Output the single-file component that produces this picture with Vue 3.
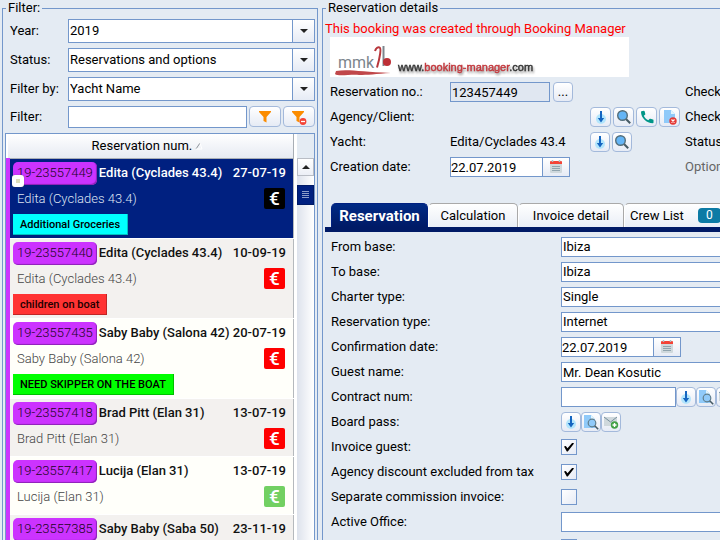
<template>
  <div class="app">
    <svg class="icon-defs" aria-hidden="true">
      <symbol id="icon-arrow-down" viewBox="0 0 16 16">
        <circle cx="8" cy="10" r="5" fill="#b3e5fc" />
        <path d="M7 2h2v7h2.2L8 13.4 4.8 9H7z" fill="#1565c0" />
      </symbol>
      <symbol id="icon-search" viewBox="0 0 16 16">
        <path d="M10 10l4.2 4.2" stroke="#455a64" stroke-width="2" />
        <circle cx="6.5" cy="6.5" r="4.8" fill="#64b5f6" stroke="#546e7a" stroke-width="1.4" />
      </symbol>
      <symbol id="icon-phone" viewBox="0 0 16 16">
        <path
          d="M2.4 2.2l2.5-.5c.4 0 .6.2.7.5l.7 2.7c.1.4 0 .6-.3.8L4.8 6.8c1 2 2.5 3.5 4.5 4.5l1.2-1.3c.2-.3.5-.4.8-.3l2.7.8c.4.1.5.3.5.7v2.3c0 .5-.3.7-.7.7C7.5 14.2 2 9 2 2.8z"
          fill="#009688"
        />
      </symbol>
      <symbol id="icon-file-remove" viewBox="0 0 16 16">
        <path d="M2 1h7l4 4v9H2z" fill="#90caf9" />
        <path d="M9 1v4h4z" fill="#e1f5fe" />
        <circle cx="11" cy="12" r="3.7" fill="#e53935" />
        <path d="M9.5 10.5l3 3m0-3l-3 3" stroke="#fff" stroke-width="1.2" />
      </symbol>
      <symbol id="icon-file-search" viewBox="0 0 16 16">
        <path d="M1 1h7l4 4v9H1z" fill="#90caf9" />
        <path d="M8 1v4h4z" fill="#e1f5fe" />
        <circle cx="9" cy="9" r="3.8" fill="#90caf9" stroke="#607d8b" stroke-width="1.2" />
        <path d="M11.7 11.7l3.5 3.5" stroke="#455a64" stroke-width="1.6" />
      </symbol>
      <symbol id="icon-mail-add" viewBox="0 0 16 16">
        <path d="M1 3h13v9H1z" fill="#cfd8dc" />
        <path d="M1 3l6.5 5L14 3" fill="none" stroke="#78909c" />
        <circle cx="11.5" cy="11" r="3.7" fill="#43a047" />
        <path d="M11.5 9v4m-2-2h4" stroke="#fff" stroke-width="1.4" />
      </symbol>
      <symbol id="icon-calendar" viewBox="0 0 16 16">
        <path d="M2 5h12v8q0 1-1 1H3q-1 0-1-1z" fill="#cfd8dc" />
        <path d="M2 5V3q0-1 1-1h10q1 0 1 1v2z" fill="#f44336" />
        <path d="M4.5 1v2m7-2v2" stroke="#b0bec5" stroke-width="1.5" />
        <path d="M4 7.5h8M4 9.5h8M4 11.5h8" stroke="#90a4ae" />
      </symbol>
      <symbol id="icon-filter" viewBox="0 0 16 16">
        <path d="M2 2h12v1L9.5 8v5.5L6.5 12V8L2 3z" fill="#fb8c00" />
      </symbol>
      <symbol id="icon-filter-remove" viewBox="0 0 16 16">
        <path d="M1 2h12v1L8.5 8v5.5L5.5 12V8L1 3z" fill="#fb8c00" />
        <circle cx="12" cy="12.5" r="3.4" fill="#f44336" />
        <path d="M10 12.5h4" stroke="#fff" stroke-width="1.3" />
      </symbol>
    </svg>

    <fieldset class="panel filter-panel">
      <legend>Filter:</legend>

      <form class="filter-form" @submit.prevent>
        <template v-for="field in filterFields" :key="field.id">
          <label :for="field.id">{{ field.label }}</label>
          <div class="combo">
            <select :id="field.id">
              <option>{{ field.value }}</option>
            </select>
            <span class="combo-arrow"></span>
          </div>
        </template>

        <label for="filter-text">Filter:</label>
        <div class="filter-text">
          <input id="filter-text" v-model="filterText" type="text" />
          <button type="button" class="btn" aria-label="Apply filter">
            <svg><use href="#icon-filter" /></svg>
          </button>
          <button type="button" class="btn" aria-label="Clear filter">
            <svg><use href="#icon-filter-remove" /></svg>
          </button>
        </div>
      </form>

      <div class="list">
        <table>
          <thead>
            <tr>
              <th>
                Reservation num.
                <svg class="sort" viewBox="0 0 8 8">
                  <path d="M1 7L5 1" stroke="#8e949b" />
                  <path d="M5 1l2 6H1" fill="none" stroke="#fff" />
                </svg>
              </th>
            </tr>
          </thead>
          <tbody>
            <tr
              v-for="item in reservations"
              :key="item.num"
              :class="{ selected: item.num === selected }"
              @click="selected = item.num"
            >
              <td>
                <div class="row-top">
                  <span class="num">{{ item.num }}</span>
                  <span class="name">{{ item.name }}</span>
                  <span class="date">{{ item.date }}</span>
                </div>
                <div class="row-mid">
                  <span>{{ item.name }}</span>
                  <span class="euro" :class="item.payment">€</span>
                </div>
                <span v-if="item.tag" class="tag" :class="item.tagColor">{{ item.tag }}</span>
                <span v-if="item.marked" class="marker"></span>
              </td>
            </tr>
          </tbody>
        </table>

        <div class="scrollbar">
          <button type="button" class="scroll-up" aria-label="Scroll up"></button>
          <div class="scroll-thumb"></div>
        </div>
      </div>
    </fieldset>

    <fieldset class="panel details-panel">
      <legend>Reservation details</legend>

      <p class="notice">This booking was created through Booking Manager</p>

      <svg class="logo" viewBox="0 0 299 40">
        <text class="logo-mmk" x="8" y="31">mmk</text>
        <path
          d="M45 14c1-3 3-4 4.5-3.5 2 .5.5 10-2.500 20"
          fill="none"
          stroke="#b8373c"
          stroke-width="2"
        />
        <path d="M53.5 9v20" stroke="#7c858c" stroke-width="2" />
        <circle cx="57" cy="25" r="4" fill="#bd2f36" />
        <path d="M6 34c13-2 25 1 55 2-15 1-24 2-32 2-8-1-21 2-24-1z" fill="#c0474a" />
        <text class="logo-url" x="68" y="34">www.<tspan class="logo-red">booking-manager</tspan>.com</text>
      </svg>

      <div class="details">
        <label for="res-no">Reservation no.:</label>
        <div class="line wide">
          <input id="res-no" class="readonly" type="text" value="123457449" readonly />
          <button type="button" class="btn more">...</button>
        </div>
        <span>Check-in:</span>

        <span>Agency/Client:</span>
        <span></span>
        <div class="line">
          <button
            v-for="icon in ['arrow-down', 'search', 'phone', 'file-remove']"
            :key="icon"
            type="button"
            class="btn icon-btn"
            :aria-label="icon"
          >
            <svg><use :href="`#icon-${icon}`" /></svg>
          </button>
        </div>
        <span>Check-out:</span>

        <span>Yacht:</span>
        <span>Edita/Cyclades 43.4</span>
        <div class="line">
          <button
            v-for="icon in ['arrow-down', 'search']"
            :key="icon"
            type="button"
            class="btn"
            :aria-label="icon"
          >
            <svg><use :href="`#icon-${icon}`" /></svg>
          </button>
        </div>
        <span>Status:</span>

        <label for="created">Creation date:</label>
        <div class="date-box wide">
          <input id="created" type="text" value="22.07.2019" />
          <button type="button" aria-label="Calendar">
            <svg><use href="#icon-calendar" /></svg>
          </button>
        </div>
        <span class="muted">Option:</span>
      </div>

      <nav class="tabs">
        <button
          v-for="tab in tabs"
          :key="tab.name"
          type="button"
          :class="[tab.size, { active: tab.name === activeTab }]"
          @click="activeTab = tab.name"
        >
          {{ tab.name }}
          <span v-if="tab.count !== undefined" class="badge">{{ tab.count }}</span>
        </button>
      </nav>

      <form class="booking-form" @submit.prevent>
        <template v-for="row in rows" :key="row.id">
          <label :for="row.id">{{ row.label }}</label>

          <div v-if="row.type === 'select'" class="combo">
            <select :id="row.id">
              <option>{{ row.value }}</option>
            </select>
            <span class="combo-arrow"></span>
          </div>

          <div v-else-if="row.type === 'date'" class="date-box">
            <input :id="row.id" v-model="row.value" type="text" />
            <button type="button" aria-label="Calendar">
              <svg><use href="#icon-calendar" /></svg>
            </button>
          </div>

          <input
            v-else-if="row.type === 'check'"
            :id="row.id"
            v-model="row.value"
            class="check"
            type="checkbox"
          />

          <div v-else-if="row.type === 'files'" class="files">
            <input v-if="row.editable" :id="row.id" v-model="row.value" type="text" />
            <button
              v-for="(icon, i) in ['arrow-down', 'file-search', 'mail-add']"
              :id="!row.editable && i === 0 ? row.id : undefined"
              :key="icon"
              type="button"
              class="btn"
              :aria-label="icon"
            >
              <svg><use :href="`#icon-${icon}`" /></svg>
            </button>
          </div>

          <input v-else :id="row.id" v-model="row.value" type="text" />
        </template>
      </form>
    </fieldset>
  </div>
</template>

<script setup>
import { ref } from 'vue'

const filterFields = [
  { id: 'year', label: 'Year:', value: '2019' },
  { id: 'status', label: 'Status:', value: 'Reservations and options' },
  { id: 'filter-by', label: 'Filter by:', value: 'Yacht Name' },
]

const filterText = ref('')
const selected = ref('19-23557449')

const reservations = [
  {
    num: '19-23557449',
    name: 'Edita (Cyclades 43.4)',
    date: '27-07-19',
    payment: 'black',
    tag: 'Additional Groceries',
    tagColor: 'cyan',
    marked: true,
  },
  {
    num: '19-23557440',
    name: 'Edita (Cyclades 43.4)',
    date: '10-09-19',
    payment: 'unpaid',
    tag: 'children on boat',
    tagColor: 'red',
  },
  {
    num: '19-23557435',
    name: 'Saby Baby (Salona 42)',
    date: '20-07-19',
    payment: 'unpaid',
    tag: 'NEED SKIPPER ON THE BOAT',
    tagColor: 'green',
  },
  { num: '19-23557418', name: 'Brad Pitt (Elan 31)', date: '13-07-19', payment: 'unpaid' },
  { num: '19-23557417', name: 'Lucija (Elan 31)', date: '13-07-19', payment: 'paid' },
  { num: '19-23557385', name: 'Saby Baby (Saba 50)', date: '23-11-19', payment: 'paid' },
]

const tabs = [
  { name: 'Reservation', size: 'medium' },
  { name: 'Calculation', size: 'small' },
  { name: 'Invoice detail', size: 'large' },
  { name: 'Crew List', size: 'counted', count: 0 },
]
const activeTab = ref('Reservation')

const rows = ref([
  { id: 'from-base', label: 'From base:', type: 'select', value: 'Ibiza' },
  { id: 'to-base', label: 'To base:', type: 'select', value: 'Ibiza' },
  { id: 'charter', label: 'Charter type:', type: 'select', value: 'Single' },
  { id: 'res-type', label: 'Reservation type:', type: 'select', value: 'Internet' },
  { id: 'confirmed', label: 'Confirmation date:', type: 'date', value: '22.07.2019' },
  { id: 'guest', label: 'Guest name:', type: 'text', value: 'Mr. Dean Kosutic' },
  { id: 'contract', label: 'Contract num:', type: 'files', value: '', editable: true },
  { id: 'board-pass', label: 'Board pass:', type: 'files' },
  { id: 'invoice-guest', label: 'Invoice guest:', type: 'check', value: true },
  { id: 'discount', label: 'Agency discount excluded from tax', type: 'check', value: true },
  { id: 'separate', label: 'Separate commission invoice:', type: 'check', value: false },
  { id: 'office', label: 'Active Office:', type: 'select', value: '' },
  { id: 'extra', label: '', type: 'check', value: false },
])
</script>

<style>
body {
  margin: 0;
  background: #e4ebf3;
}
</style>

<style scoped>
.app {
  display: flex;
  gap: 4px;
  height: 100vh;
  padding-left: 2px;
  overflow: hidden;
  box-sizing: border-box;
  background: #e4ebf3;
  color: #000;
  font-family: Roboto, 'Liberation Sans', sans-serif;
  font-size: 13px;
  line-height: 16px;
}

.app *,
.app *::before {
  box-sizing: border-box;
}

.icon-defs {
  position: absolute;
  width: 0;
  height: 0;
}

.panel {
  margin: 0;
  padding: 0 2px;
  border: 1px solid #7397cb;
  border-bottom: none;
}

.panel legend {
  height: 16px;
  margin-left: 1px;
  padding: 0 2px;
}

button,
input,
select {
  margin: 0;
  color: inherit;
  font: inherit;
}

input,
select {
  min-width: 0;
  height: 20px;
  padding: 0 1px;
  border: 1px solid #7397cb;
  border-radius: 0;
  background: #fff;
}

select {
  width: 100%;
  appearance: none;
}

.btn {
  display: flex;
  flex: none;
  align-items: center;
  justify-content: center;
  width: 20px;
  height: 20px;
  padding: 0;
  border: 1px solid #a3b9db;
  border-radius: 4px;
  background: linear-gradient(#fff, #e6ebf5);
}

.btn svg {
  width: 16px;
  height: 16px;
}

.combo {
  position: relative;
}

.combo-arrow {
  position: absolute;
  top: 1px;
  right: 1px;
  bottom: 1px;
  display: flex;
  align-items: center;
  justify-content: center;
  width: 22px;
  border-left: 1px solid #7397cb;
  background: linear-gradient(#fff, #e6ebf5);
  pointer-events: none;
}

.combo-arrow::before {
  content: '';
  border: 4px solid transparent;
  border-top-color: #222;
  border-bottom: none;
}

/* Filter panel */
.filter-panel {
  display: flex;
  flex: none;
  flex-direction: column;
  width: 316px;
}

.filter-form {
  display: grid;
  grid-template-columns: 58px 1fr;
  row-gap: 5px;
  align-items: center;
  margin: 3px 0 5px;
  padding-left: 5px;
}

.filter-form select {
  display: block;
  height: 24px;
}

.filter-text {
  display: flex;
  gap: 2px;
}

.filter-text input {
  flex: 1;
  height: 22px;
}

.filter-text .btn {
  width: 32px;
  height: 21px;
}

.list {
  display: flex;
  gap: 3px;
  height: 480px;
  border: 1px solid #7397cb;
  background: #fff;
}

table {
  flex: 1;
  align-self: flex-start;
  border-collapse: collapse;
}

th {
  height: 24px;
  padding: 0 6px 0 0;
  border-right: 1px solid #a8aeb5;
  border-bottom: 1px solid #a8aeb5;
  background: linear-gradient(#fff, #e6eaf2);
  font-weight: 400;
}

.sort {
  width: 8px;
  height: 8px;
}

td {
  position: relative;
  padding: 3px 7px 3px 3px;
  border-left: 4px solid #cc33ff;
  border-right: 1px solid #b5b9bd;
  border-bottom: 1px solid #fff;
  background: #fffffa;
  color: #111;
}

tbody tr:nth-child(even) td {
  background: #f3f1ef;
}

tbody tr.selected td {
  background: #002080;
  color: #fff;
}

.row-top {
  display: flex;
  align-items: center;
  height: 23px;
  font-weight: 500;
}

.num {
  height: 23px;
  margin-right: 2px;
  padding: 0 4px;
  border-radius: 5px;
  background: #cc33ff;
  box-shadow: inset -1px -1px 1px #8c22b5;
  color: #1a0524;
  font-weight: 300;
  line-height: 22px;
}

.date {
  margin-left: auto;
}

.row-mid {
  display: flex;
  align-items: center;
  justify-content: space-between;
  height: 28px;
  padding: 0 1px 0 4px;
  color: #444;
  font-weight: 300;
}

.selected .row-mid {
  color: #dfe4f2;
}

.euro {
  width: 21px;
  height: 21px;
  border-radius: 2px;
  color: #fff;
  font-size: 19px;
  font-weight: 500;
  line-height: 21px;
  text-align: center;
}

.euro.black {
  background: #000;
}

.euro.unpaid {
  background: #f00;
}

.euro.paid {
  background: #72d062;
}

.tag {
  display: block;
  width: max-content;
  height: 21px;
  margin-top: 1px;
  padding: 0 8px 0 7px;
  box-shadow: inset -1px -1px rgba(0, 0, 0, 0.25);
  color: #000;
  font-size: 11px;
  font-weight: 500;
  line-height: 21px;
}

.tag.cyan {
  background: #0ff;
}

.tag.red {
  background: #f33;
  color: #200;
}

.tag.green {
  background: #0f0;
}

.marker {
  position: absolute;
  top: 16px;
  left: 2px;
  width: 12px;
  height: 12px;
  border: 4px solid #fff;
  border-radius: 3px;
  background: #dedebb;
  box-shadow: 0 0 1px #555;
}

.scrollbar {
  width: 17px;
  border-top: 24px solid #e4ebf3;
  background: linear-gradient(90deg, #dde2ec, #fff);
}

.scroll-up {
  display: flex;
  align-items: center;
  justify-content: center;
  width: 17px;
  height: 18px;
  padding: 0;
  border: 1px solid #b9bdc5;
  background: linear-gradient(#fff, #eceff6);
}

.scroll-up::before {
  content: '';
  border: 4px solid transparent;
  border-top: none;
  border-bottom-color: #222;
}

.scroll-thumb {
  height: 20px;
  margin-top: 9px;
  padding: 5px 4px;
  border: 1px solid #001a66;
  background: repeating-linear-gradient(#8d9cc9 0 1px, #002080 1px 2px) content-box, #002080;
}

/* Details panel */
.details-panel {
  flex: 1 0 620px;
}

.notice {
  margin: 5px 0 0;
  color: #f00;
}

.logo {
  display: block;
  width: 299px;
  height: 40px;
  margin-left: 5px;
  background: #fff;
}

.logo-mmk {
  fill: #7c858c;
  font-family: Roboto, sans-serif;
  font-size: 16px;
}

.logo-url {
  fill: #333;
  stroke: #333;
  stroke-width: 0.4px;
  filter: drop-shadow(1px 2px 1px #999);
  font-family: 'Liberation Sans', sans-serif;
  font-size: 11px;
}

.logo-red {
  fill: #c4373c;
  stroke: #c4373c;
}

.details {
  display: grid;
  grid-template-columns: 120px 140px 95px 1fr;
  grid-auto-rows: 20px;
  row-gap: 5px;
  align-items: center;
  margin: 5px 0 26px 5px;
}

.line {
  display: flex;
  gap: 2px;
}

.wide {
  grid-column: span 2;
}

.line input {
  width: 100px;
}

.line .icon-btn {
  width: 21px;
}

input.readonly {
  background: #e0e7f1;
}

.btn.more {
  margin-left: 1px;
}

.muted {
  color: #666;
}

.date-box {
  display: flex;
}

.date-box input {
  width: 93px;
  padding: 0;
}

.date-box button {
  display: flex;
  align-items: center;
  justify-content: center;
  width: 27px;
  height: 20px;
  padding: 0;
  border: 1px solid #7397cb;
  border-left: none;
  background: linear-gradient(#fff, #e6ebf5);
}

.date-box svg {
  width: 16px;
  height: 16px;
}

.tabs {
  display: flex;
  height: 29px;
  margin-right: -3px;
  padding-left: 6px;
  border-bottom: 5px solid #001a66;
}

.tabs button {
  height: 24px;
  padding: 0 6px;
  border: 1px solid #a9a9a9;
  border-bottom: none;
  border-left-color: #fff;
  border-radius: 5px 5px 0 0;
  background: linear-gradient(#fff, #e9eef6);
}

.tabs button.active {
  border-color: #002080;
  background: linear-gradient(#002a85, #001a66);
  color: #fff;
  font-size: 15px;
  font-weight: 700;
}

.tabs .medium {
  width: 97px;
}

.tabs .small {
  width: 90px;
}

.tabs .large {
  width: 106px;
}

.tabs .counted {
  display: flex;
  align-items: center;
  gap: 14px;
  padding-left: 5px;
}

.badge {
  width: 23px;
  height: 15px;
  border-radius: 4px;
  background: #0d7ba5;
  color: #fff;
  font-size: 12px;
  line-height: 15px;
}

.booking-form {
  display: grid;
  grid-template-columns: 230px 1fr;
  grid-auto-rows: 20px;
  row-gap: 5px;
  align-items: center;
  padding: 5px 0 0 6px;
}

.booking-form .combo {
  height: 20px;
}

.booking-form select,
.booking-form > input {
  display: block;
}

.files {
  display: flex;
}

.files input {
  width: 115px;
}

.booking-form > .check {
  display: flex;
  align-items: center;
  justify-content: center;
  width: 16px;
  height: 16px;
  background: linear-gradient(135deg, #fff, #e6ebf5);
  appearance: none;
}

.check:checked::before {
  content: '';
  flex: none;
  width: 10px;
  height: 9px;
  background: #000;
  clip-path: polygon(0 45%, 18% 38%, 35% 65%, 85% 0, 100% 12%, 38% 100%, 28% 100%);
}
</style>
